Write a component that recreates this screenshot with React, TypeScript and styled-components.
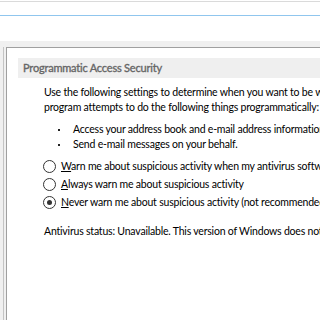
import React from "react";
import styled, { createGlobalStyle } from "styled-components";

const GlobalStyle = createGlobalStyle`
  html, body {
    margin: 0;
    padding: 0;
    background: #f0f0f0;
  }
  body {
    font-family: Lato, "Noto Sans", sans-serif;
    font-size: 10.5px;
    letter-spacing: -0.2px;
    color: #000;
  }
`;

const Screen = styled.div`
  width: 320px;
  height: 320px;
  overflow: hidden;
  display: flex;
  flex-direction: column;
  background: #f0f0f0;
`;

const TopArea = styled.div`
  height: 41px;
  flex-shrink: 0;
  background: #fff;
  padding-top: 1px;
  box-sizing: border-box;
  display: flex;
  flex-direction: column;
`;

const Rule = styled.div<{ $color: string; $gap: number }>`
  height: 1px;
  margin-top: ${(p) => p.$gap}px;
  background: ${(p) => p.$color};
`;

const FrameRow = styled.div`
  flex: 1;
  margin-top: 6px;
  display: flex;
  min-height: 0;
`;

const OuterEdge = styled.div`
  width: 2px;
  margin-left: 3px;
  border-left: 1px solid #c4c4c4;
  background: #f0f0f0;
`;

const Panel = styled.div`
  flex: 1;
  background: #fff;
  border-left: 1px solid #a0a0a0;
  border-top: 1px solid #a0a0a0;
  padding: 10px 0 0 11px;
  min-width: 0;
  overflow: hidden;
`;

const SectionHeader = styled.div`
  height: 20px;
  line-height: 20px;
  background: #efefef;
  color: #666;
  font-size: 11px;
  letter-spacing: -0.2px;
  -webkit-text-stroke: 0.35px #666;
  padding-left: 5px;
  white-space: nowrap;
`;

const Body = styled.div`
  padding-left: 26px;
  margin-top: 7px;
  white-space: nowrap;
  line-height: 15px;
`;

const Para = styled.p`
  margin: 0;
`;

const BulletList = styled.ul`
  list-style: none;
  margin: 7px 0 0 0;
  padding: 0 0 0 14px;
`;

const BulletItem = styled.li`
  display: flex;
  align-items: center;
  gap: 13px;
  height: 15px;
`;

const Dot = styled.span`
  width: 2px;
  height: 2px;
  background: #222;
  flex-shrink: 0;
`;

const RadioGroup = styled.div`
  margin-top: 7px;
  display: flex;
  flex-direction: column;
  gap: 3px;
  margin-left: -1px;
`;

const RadioRow = styled.label`
  display: flex;
  align-items: center;
  gap: 5px;
  height: 15px;
  line-height: 15px;
`;

const RadioCircle = styled.span<{ $checked?: boolean }>`
  width: 11px;
  height: 11px;
  border: 1px solid #333;
  border-radius: 50%;
  background: #fff;
  display: flex;
  align-items: center;
  justify-content: center;
  flex-shrink: 0;

  &::after {
    content: "";
    width: 5px;
    height: 5px;
    border-radius: 50%;
    background: ${(p) => (p.$checked ? "#333" : "transparent")};
  }
`;

const AccessKey = styled.span`
  text-decoration: underline;
`;

const Status = styled.p`
  margin: 14px 0 0 0;
`;

const radios = [
  { key: "W", rest: "arn me about suspicious activity when my antivirus software is inactive or out-of-date (recommended)" },
  { key: "A", rest: "lways warn me about suspicious activity" },
  { key: "N", rest: "ever warn me about suspicious activity (not recommended)", checked: true },
];

export default function App() {
  return (
    <Screen>
      <GlobalStyle />
      <TopArea>
        <Rule $color="#dadada" $gap={0} />
        <Rule $color="#90c6ee" $gap={13} />
      </TopArea>
      <FrameRow>
        <OuterEdge />
        <Panel>
          <SectionHeader>Programmatic Access Security</SectionHeader>
          <Body>
            <Para>Use the following settings to determine when you want to be warned about suspicious activity when a</Para>
            <Para>program attempts to do the following things programmatically:</Para>
            <BulletList>
              <BulletItem>
                <Dot />
                Access your address book and e-mail address information.
              </BulletItem>
              <BulletItem>
                <Dot />
                Send e-mail messages on your behalf.
              </BulletItem>
            </BulletList>
            <RadioGroup>
              {radios.map((r) => (
                <RadioRow key={r.key}>
                  <RadioCircle $checked={r.checked} />
                  <span>
                    <AccessKey>{r.key}</AccessKey>
                    {r.rest}
                  </span>
                </RadioRow>
              ))}
            </RadioGroup>
            <Status>Antivirus status: Unavailable. This version of Windows does not support antivirus detection.</Status>
          </Body>
        </Panel>
      </FrameRow>
    </Screen>
  );
}
